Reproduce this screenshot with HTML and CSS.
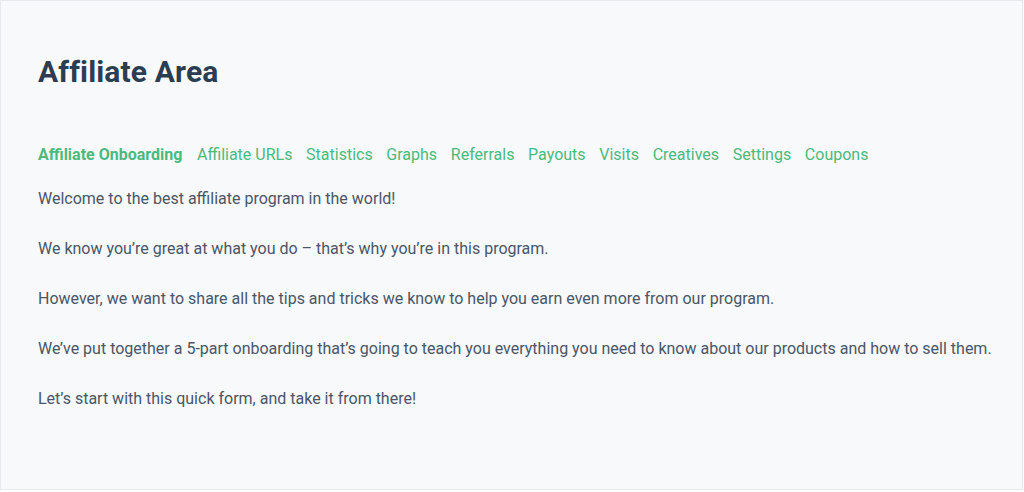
FILE: index.html
```html
<!DOCTYPE html>
<html>
<head>
<meta charset="utf-8">
<link rel="stylesheet" href="styles.css">
</head>
<body>
<div class="area">
  <h1 class="title">Affiliate Area</h1>
  <nav class="tabs">
    <a class="tab active" href="#">Affiliate Onboarding</a>
    <a class="tab" href="#">Affiliate URLs</a>
    <a class="tab" href="#">Statistics</a>
    <a class="tab" href="#">Graphs</a>
    <a class="tab" href="#">Referrals</a>
    <a class="tab" href="#">Payouts</a>
    <a class="tab" href="#">Visits</a>
    <a class="tab" href="#">Creatives</a>
    <a class="tab" href="#">Settings</a>
    <a class="tab" href="#">Coupons</a>
  </nav>
  <div class="content">
    <p>Welcome to the best affiliate program in the world!</p>
    <p>We know you’re great at what you do – that’s why you’re in this program.</p>
    <p>However, we want to share all the tips and tricks we know to help you earn even more from our program.</p>
    <p>We’ve put together a 5-part onboarding that’s going to teach you everything you need to know about our products and how to sell them.</p>
    <p>Let’s start with this quick form, and take it from there!</p>
  </div>
</div>
</body>
</html>
```
FILE: styles.css
```css
html, body {
  margin: 0;
  padding: 0;
  background: #ffffff;
}
body {
  font-family: Roboto, "Liberation Sans", sans-serif;
}
.area {
  box-sizing: border-box;
  width: 1023px;
  height: 490px;
  border: 1px solid #e6e9ed;
  background: #f7f9fb;
  padding: 51px 0 0 37px;
}
.title {
  margin: 0;
  font-size: 30px;
  line-height: 40px;
  font-weight: 700;
  letter-spacing: 0.15px;
  color: #2b3d50;
}
.tabs {
  display: flex;
  gap: 13.7px;
  margin-top: 51px;
  font-size: 16px;
  line-height: 24px;
}
.tab {
  color: #4cb97d;
  text-decoration: none;
}
.tab.active {
  font-weight: 700;
  margin-right: 1px;
}
.content {
  margin-top: 20px;
  font-size: 16px;
  line-height: 24px;
  color: #4a5667;
}
.content p {
  margin: 0 0 26px;
}
```
